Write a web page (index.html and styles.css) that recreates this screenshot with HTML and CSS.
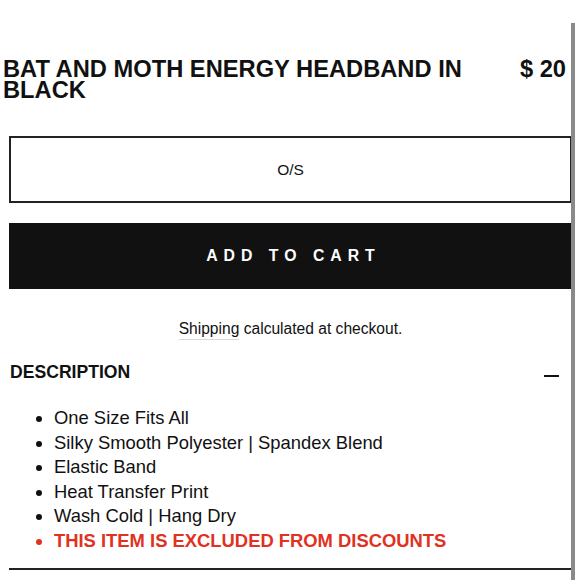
FILE: index.html
```html
<!DOCTYPE html>
<html lang="en">
<head>
<meta charset="utf-8">
<title>Bat and Moth Energy Headband in Black</title>
<link rel="stylesheet" href="styles.css">
</head>
<body>
<div class="scrollbar"></div>
<main class="product">
  <header class="product-header">
    <h1 class="product-title">BAT AND MOTH ENERGY HEADBAND IN BLACK</h1>
    <div class="product-price">$ 20</div>
  </header>
  <div class="variant-box">O/S</div>
  <button class="add-to-cart" type="button">ADD TO CART</button>
  <p class="shipping"><a class="shipping-link" href="#">Shipping</a> calculated at checkout.</p>
  <section class="description">
    <div class="description-head">
      <h2 class="description-title">DESCRIPTION</h2>
      <span class="toggle"></span>
    </div>
    <ul class="features">
      <li>One Size Fits All</li>
      <li>Silky Smooth Polyester | Spandex Blend</li>
      <li>Elastic Band</li>
      <li>Heat Transfer Print</li>
      <li>Wash Cold | Hang Dry</li>
      <li class="excluded">THIS ITEM IS EXCLUDED FROM DISCOUNTS</li>
    </ul>
  </section>
</main>
</body>
</html>
```

FILE: styles.css
```css
html, body {
  margin: 0;
  padding: 0;
  background: #ffffff;
}
body {
  font-family: "Liberation Sans", Arial, sans-serif;
  color: #111111;
  width: 580px;
  height: 580px;
  overflow: hidden;
}
.scrollbar {
  position: absolute;
  left: 571px;
  top: 23px;
  width: 4px;
  height: 557px;
  background: #8a8a8a;
}
.product {
  padding: 0 8px 0 9px;
}
.product-header {
  display: flex;
  justify-content: space-between;
  align-items: flex-start;
  padding-top: 59px;
  margin-left: -6px;
}
.product-title {
  margin: 0;
  font-size: 23.7px;
  line-height: 21px;
  font-weight: 700;
  width: 480px;
  letter-spacing: 0;
}
.product-price {
  font-size: 23.7px;
  line-height: 21px;
  font-weight: 700;
  margin-right: 6px;
}
.variant-box {
  margin-top: 35px;
  height: 63px;
  border: 2px solid #222222;
  display: flex;
  align-items: center;
  justify-content: center;
  font-size: 15.5px;
  color: #111111;
}
.add-to-cart {
  display: block;
  width: 100%;
  margin-top: 20px;
  height: 66px;
  border: 0;
  background: #111111;
  color: #ffffff;
  font-family: "Liberation Sans", Arial, sans-serif;
  font-weight: 700;
  font-size: 15.8px;
  letter-spacing: 0.38em;
  padding: 0 0 0 0.38em;
}
.shipping {
  margin: 30px 0 0;
  text-align: center;
  font-size: 15.6px;
  line-height: 20px;
  color: #111111;
}
.shipping-link {
  color: #111111;
  text-decoration: none;
  border-bottom: 1px solid #d8d8d8;
  padding-bottom: 2px;
}
.description-head {
  display: flex;
  justify-content: space-between;
  align-items: center;
  margin-top: 22px;
  padding-left: 1px;
}
.description-title {
  margin: 0;
  font-size: 17.6px;
  line-height: 22px;
  font-weight: 700;
}
.toggle {
  width: 15px;
  height: 2px;
  background: #111111;
  margin: 8px 13px 0 0;
}
.features {
  margin: 23px 0 0;
  padding: 0 0 14px 45px;
  font-size: 18.4px;
  line-height: 24.6px;
  border-bottom: 2px solid #222222;
}
.features li {
  padding-left: 0;
}
.excluded {
  color: #e0321e;
  font-weight: 700;
}
```
